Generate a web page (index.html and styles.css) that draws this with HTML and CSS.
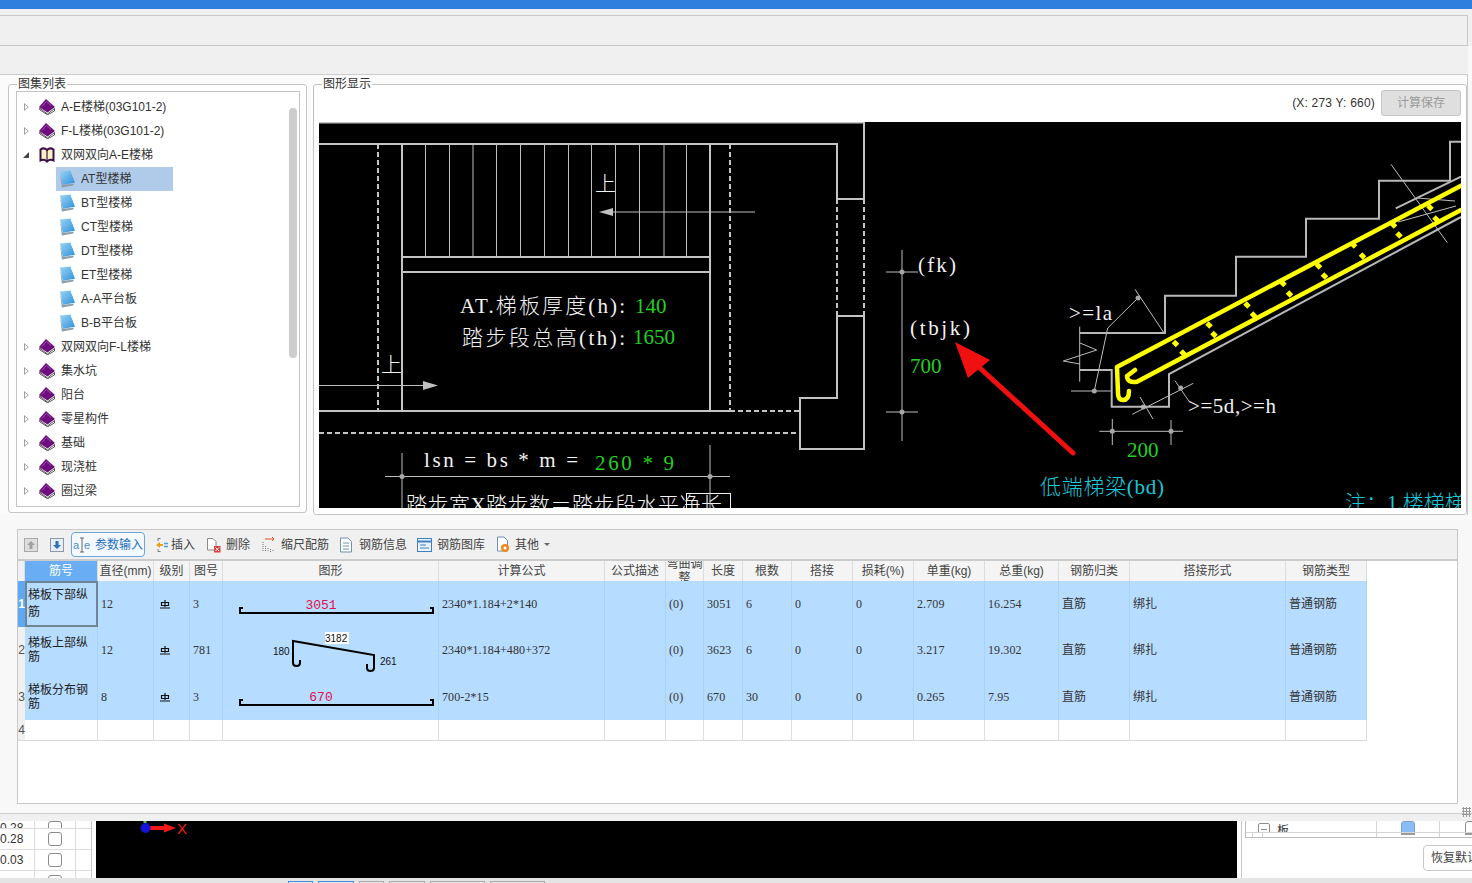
FILE: index.html
```html
<!DOCTYPE html>
<html lang="zh">
<head>
<meta charset="utf-8">
<title>钢筋编辑</title>
<link rel="stylesheet" href="styles.css">
</head>
<body>
<svg class="defs" aria-hidden="true">
  <defs>
    <linearGradient id="docBlue" x1="0" y1="0" x2="1" y2="1">
      <stop offset="0" stop-color="#9ad4f4"/><stop offset="1" stop-color="#2f90dc"/>
    </linearGradient>
    <symbol id="book" viewBox="0 0 16 16">
      <path d="M.5 9 8.500 15 15.500 9.500V12L8.500 15.800 1 11Z" fill="#fff" stroke="#333" stroke-width=".8"/>
      <path d="M0 8 7 0 16 8 8.500 13.500Z" fill="#6f0f7d"/>
      <path d="M3 7.500 7.500 2.500 12 6.500" stroke="#9c46ac" stroke-width="1" fill="none"/>
    </symbol>
    <symbol id="bookOpen" viewBox="0 0 16 16">
      <path d="M1.500 2.500 Q5 0 8 3 Q11 0 14.500 2.500V13.500Q11 11.500 8 14.500 Q5 11.500 1.500 13.500Z" fill="#fbf3c4" stroke="#3e1046" stroke-width="2"/>
      <path d="M8 3V14" stroke="#3e1046" stroke-width="1.200"/>
    </symbol>
    <symbol id="doc" viewBox="0 0 16 18">
      <path d="M0 2 2 18 14 16 15 14 3 15Z" fill="#8f9ca6"/>
      <path d="M0 1 11 0 16 13 3 15Z" fill="url(#docBlue)"/>
    </symbol>
    <symbol id="grade" viewBox="0 0 10 10">
      <path d="M1.500 3.500H8.500V6.500H1.500ZM5 1V8M0 9H10" fill="none" stroke="#111" stroke-width="1.200"/>
    </symbol>
  </defs>
</svg>

<div class="dialog">
  <div class="titlebar"></div>
  <div class="band band-first"><div class="band-box"></div></div>
  <div class="band band-second"></div>

  <div class="workspace">
    <fieldset class="group group-list">
      <legend>图集列表</legend>
      <div class="listbox">
        <ul class="tree">
          <li class="node"><span class="tw"></span><svg class="ico"><use href="#book"/></svg><span>A-E楼梯(03G101-2)</span></li>
          <li class="node"><span class="tw"></span><svg class="ico"><use href="#book"/></svg><span>F-L楼梯(03G101-2)</span></li>
          <li class="node"><span class="tw open"></span><svg class="ico"><use href="#bookOpen"/></svg><span>双网双向A-E楼梯</span></li>
          <li class="leaf selected"><svg class="ico-doc"><use href="#doc"/></svg><span>AT型楼梯</span></li>
          <li class="leaf"><svg class="ico-doc"><use href="#doc"/></svg><span>BT型楼梯</span></li>
          <li class="leaf"><svg class="ico-doc"><use href="#doc"/></svg><span>CT型楼梯</span></li>
          <li class="leaf"><svg class="ico-doc"><use href="#doc"/></svg><span>DT型楼梯</span></li>
          <li class="leaf"><svg class="ico-doc"><use href="#doc"/></svg><span>ET型楼梯</span></li>
          <li class="leaf"><svg class="ico-doc"><use href="#doc"/></svg><span>A-A平台板</span></li>
          <li class="leaf"><svg class="ico-doc"><use href="#doc"/></svg><span>B-B平台板</span></li>
          <li class="node"><span class="tw"></span><svg class="ico"><use href="#book"/></svg><span>双网双向F-L楼梯</span></li>
          <li class="node"><span class="tw"></span><svg class="ico"><use href="#book"/></svg><span>集水坑</span></li>
          <li class="node"><span class="tw"></span><svg class="ico"><use href="#book"/></svg><span>阳台</span></li>
          <li class="node"><span class="tw"></span><svg class="ico"><use href="#book"/></svg><span>零星构件</span></li>
          <li class="node"><span class="tw"></span><svg class="ico"><use href="#book"/></svg><span>基础</span></li>
          <li class="node"><span class="tw"></span><svg class="ico"><use href="#book"/></svg><span>现浇桩</span></li>
          <li class="node"><span class="tw"></span><svg class="ico"><use href="#book"/></svg><span>圈过梁</span></li>
        </ul>
        <div class="scroll-thumb"></div>
      </div>
    </fieldset>

    <fieldset class="group group-view">
      <legend>图形显示</legend>
      <div class="view-head">
        <span class="coords">(X: 273 Y: 660)</span>
        <button class="save-btn" disabled>计算保存</button>
      </div>
      <svg class="cad" viewBox="319 122 1142 386" width="1142" height="386">
        <g class="wall">
          <path d="M319 122.500H864M319 144H837V199H864M864 122V199M837 316H864V449H800V398H837V316"/>
          <path d="M319 411H730M402 144V411M710 144V411M402 257H710M402 272H710"/>
        </g>
        <g class="wall-dash">
          <path d="M378 144V411M730 144V411M730 411H800M319 433H800M837 199V316M864 199V316"/>
        </g>
        <g class="thin">
          <path d="M425.500 144V257M449.500 144V257M473 144V257M496.500 144V257M520.500 144V257M544.500 144V257M568.500 144V257M591.500 144V257M615.500 144V257M639.500 144V257M664 144V257M686.500 144V257"/>
          <path d="M613 212H755M319 385.500H423"/>
          <path d="M402 453V508M710 445V508M385 476.500H730"/>
          <path d="M902 250V441M886 272H918M886 412H918"/>
          <path d="M1135 289.300 1164 333M1138 298 1107.700 328 1094.300 391H1071M1094.300 391H1112M1079.700 326.700V381.700M1080 343 1096.700 350 1063.300 361 1080 364"/>
          <path d="M1175 380.700 1189.300 401.700M1140 397 1153 419M1132.300 414.300 1193.300 383.300"/>
          <path d="M1099.300 431.300H1183M1112.300 419V445M1171 420V445"/>
          <path d="M1391 164.300 1447.300 242.700M1455 201 1417 198M1398 222 1456 206"/>
        </g>
        <path class="arrowhead" d="M599 212 613 208V216ZM438 385.500 423 381V390Z"/>
        <g class="dots">
          <circle cx="402" cy="476.500" r="2.500"/><circle cx="710" cy="476.500" r="2.500"/>
          <circle cx="902" cy="272" r="2.500"/><circle cx="902" cy="412" r="2.500"/>
          <circle cx="1138" cy="298" r="2.500"/><circle cx="1094.300" cy="391" r="2.500"/>
          <circle cx="1143.300" cy="407" r="2.500"/><circle cx="1180.700" cy="388" r="2.500"/>
          <circle cx="1112.300" cy="431.300" r="2.500"/><circle cx="1171" cy="431.300" r="2.500"/>
        </g>
        <rect class="note-box" x="686.500" y="493.500" width="44" height="20"/>
        <g class="wall-gray">
          <path d="M1079.700 333H1165V295.700H1236V256.700H1306V218.700H1379V180.700H1450V141.700H1462"/>
          <path d="M1079.700 370H1111.700V406.700H1169V374L1461 217M1395.700 208.300 1461 176.700"/>
        </g>
        <g class="rebar">
          <path d="M1461 185.700 1117 367 1118 393Q1118 400 1123 400 1129 400 1129 391"/>
          <path d="M1461 210 1137 381.700Q1127 383 1127 376L1135 370"/>
        </g>
        <path class="rebar-dots" d="M1173.500 341.500l4 4M1207 323l4 4M1245 303l4 4M1281 281.500l4 4M1316.500 264l4 4M1351.500 243l4 4M1391.500 223l4 4M1428 205.500l4 4M1181 351l4 4M1212 332.500l4 4M1251.500 313l4 4M1287.500 292l4 4M1322.500 274l4 4M1360.500 254l4 4M1397 233l4 4M1434 217l4 4"/>
        <path class="red-shaft" d="M1073 453 970 359"/>
        <path class="red-head" d="M955 342 990 360 968 378Z"/>

        <text class="t-white" x="595" y="191"><tspan class="cjk">上</tspan></text>
        <text class="t-white" x="381" y="372"><tspan class="cjk">上</tspan></text>
        <text class="t-white" x="460" y="313" textLength="165">AT.<tspan class="cjk">梯板厚度</tspan>(h):</text>
        <text class="t-green" x="635" y="313">140</text>
        <text class="t-white" x="462" y="345" textLength="163"><tspan class="cjk">踏步段总高</tspan>(th):</text>
        <text class="t-green" x="633" y="344">1650</text>
        <text class="t-white" x="424" y="467" textLength="154">lsn = bs * m =</text>
        <text class="t-green" x="595" y="470" textLength="79">260 * 9</text>
        <text class="t-white" x="406" y="512" textLength="316"><tspan class="cjk">踏步宽</tspan>X<tspan class="cjk">踏步数＝踏步段水平净长</tspan></text>
        <text class="t-white" x="918" y="272" textLength="38">(fk)</text>
        <text class="t-white" x="910" y="335" textLength="60">(tbjk)</text>
        <text class="t-green" x="910" y="373">700</text>
        <text class="t-white" x="1069" y="320" textLength="43">&gt;=la</text>
        <text class="t-white" x="1188" y="413" textLength="88">&gt;=5d,&gt;=h</text>
        <text class="t-green" x="1127" y="457">200</text>
        <text class="t-cyan" x="1040" y="494" textLength="124"><tspan class="cjk">低端梯梁</tspan>(bd)</text>
        <text class="t-cyan" x="1345" y="510"><tspan class="cjk">注：</tspan>1.<tspan class="cjk">楼梯梯板</tspan></text>
      </svg>
    </fieldset>
  </div>

  <section class="editor">
    <div class="toolbar">
      <span class="tool-square"><svg width="14" height="14" viewBox="0 0 14 14"><rect x=".5" y=".5" width="13" height="13" fill="#dedede" stroke="#a8a8a8"/><path d="M7 3 11 7H8.500V11H5.500V7H3Z" fill="#a0a0a0"/></svg></span>
      <span class="tool-square"><svg width="14" height="14" viewBox="0 0 14 14"><rect x=".5" y=".5" width="13" height="13" fill="#e8eef5" stroke="#8a98a8"/><path d="M7 11 3 7H5.500V3H8.500V7H11Z" fill="#2f6fb8"/></svg></span>
      <button class="tool tool-active"><svg width="18" height="16" viewBox="0 0 18 16"><text class="tool-glyph" x="0" y="12">a</text><path d="M9 1V15M7 1H11M7 15H11" stroke="#666" fill="none"/><text class="tool-glyph" x="11" y="12">e</text></svg><span>参数输入</span></button>
      <span class="tool tool-ins"><svg width="14" height="16" viewBox="0 0 14 16"><path d="M3 1.500H5.500M3 14.500H5.500M3 1.500V4M3 12V14.500" stroke="#777" fill="none"/><path d="M9 6.500H13M9 9.500H13" stroke="#4aa0d8" stroke-width="1.500"/><path d="M1 8 5 5V7H8V9H5V11Z" fill="#e8a020"/></svg><span>插入</span></span>
      <span class="tool tool-del"><svg width="15" height="16" viewBox="0 0 15 16"><path d="M1.500 1.500H7L10 4.500V13H1.500Z" fill="#fff" stroke="#8a8a8a"/><rect x="8" y="9" width="6.500" height="6.500" fill="#d8423c"/><path d="M9.500 10.500 13 14M13 10.500 9.500 14" stroke="#fff"/></svg><span>删除</span></span>
      <span class="tool"><svg width="14" height="16" viewBox="0 0 14 16"><path d="M1 5V15M3.500 9V15M6 11V15M8.500 12V15M11 13V15" stroke="#777" stroke-dasharray="1 1"/><path d="M3 2H12M10 0 12 2 10 4" stroke="#e0562c" fill="none"/></svg><span>缩尺配筋</span></span>
      <span class="tool tool-info"><svg width="14" height="16" viewBox="0 0 14 16"><path d="M1.500 1H9L12.500 4.500V15H1.500Z" fill="#fff" stroke="#6d90b4"/><path d="M4 6H10M4 9H10M4 12H10" stroke="#6d90b4"/></svg><span>钢筋信息</span></span>
      <span class="tool"><svg width="15" height="14" viewBox="0 0 15 14"><rect x=".5" y=".5" width="14" height="13" fill="#eaf3fb" stroke="#3f80c0"/><path d="M1 3.500H14" stroke="#3f80c0" stroke-width="2"/><path d="M3 7H9M3 10H12" stroke="#3f80c0"/></svg><span>钢筋图库</span></span>
      <span class="tool tool-other"><svg width="16" height="17" viewBox="0 0 16 17"><path d="M2.500 1H9L12.500 4.500V15H2.500Z" fill="#fff" stroke="#6d90b4"/><circle cx="10" cy="12" r="4" fill="#ef8a18"/><circle cx="10" cy="12" r="1.500" fill="#fff"/></svg><span>其他</span><span class="caret"></span></span>
    </div>

    <table class="grid">
      <colgroup>
        <col class="c-rh"><col class="c-no"><col class="c-dia"><col class="c-lv"><col class="c-fig"><col class="c-shape"><col class="c-formula"><col class="c-desc"><col class="c-bend"><col class="c-len"><col class="c-cnt"><col class="c-lap"><col class="c-loss"><col class="c-uw"><col class="c-tw"><col class="c-cat"><col class="c-form"><col class="c-type">
      </colgroup>
      <thead>
        <tr>
          <th class="corner"></th><th class="hl">筋号</th><th>直径(mm)</th><th>级别</th><th>图号</th><th>图形</th><th>计算公式</th><th>公式描述</th><th><div class="clip"><span>弯曲调整</span></div></th><th>长度</th><th>根数</th><th>搭接</th><th>损耗(%)</th><th>单重(kg)</th><th>总重(kg)</th><th>钢筋归类</th><th>搭接形式</th><th>钢筋类型</th>
        </tr>
      </thead>
      <tbody>
        <tr class="row-a">
          <td class="rh rh-on">1</td><td class="name cur">梯板下部纵筋</td><td class="num">12</td><td class="sym"><svg width="10" height="10"><use href="#grade"/></svg></td><td class="num">3</td>
          <td class="shape"><svg viewBox="223 581 216 46" width="216" height="46"><path class="bar" d="M243 608H240V613H433V608H430"/><text class="len" x="321" y="609">3051</text></svg></td>
          <td class="num">2340*1.184+2*140</td><td></td><td class="num">(0)</td><td class="num">3051</td><td class="num">6</td><td class="num">0</td><td class="num">0</td><td class="num">2.709</td><td class="num">16.254</td><td class="cn">直筋</td><td class="cn">绑扎</td><td class="cn">普通钢筋</td>
        </tr>
        <tr class="row-b">
          <td class="rh">2</td><td class="name">梯板上部纵筋</td><td class="num">12</td><td class="sym"><svg width="10" height="10"><use href="#grade"/></svg></td><td class="num">781</td>
          <td class="shape"><svg viewBox="223 627 216 46" width="216" height="46"><path class="bar" d="M300 660V663Q300 666 296.500 666 293 666 293 663V641L374 655V668Q374 671 370.500 671 367 671 367 668V664"/><rect class="dim-bg" x="325" y="632" width="24" height="12"/><text class="dim" x="325" y="642">3182</text><text class="dim" x="273" y="655">180</text><text class="dim" x="380" y="665">261</text></svg></td>
          <td class="num">2340*1.184+480+372</td><td></td><td class="num">(0)</td><td class="num">3623</td><td class="num">6</td><td class="num">0</td><td class="num">0</td><td class="num">3.217</td><td class="num">19.302</td><td class="cn">直筋</td><td class="cn">绑扎</td><td class="cn">普通钢筋</td>
        </tr>
        <tr class="row-c">
          <td class="rh">3</td><td class="name">梯板分布钢筋</td><td class="num">8</td><td class="sym"><svg width="10" height="10"><use href="#grade"/></svg></td><td class="num">3</td>
          <td class="shape"><svg viewBox="223 673 216 47" width="216" height="47"><path class="bar" d="M243 700H240V705H433V700H430"/><text class="len" x="321" y="701">670</text></svg></td>
          <td class="num">700-2*15</td><td></td><td class="num">(0)</td><td class="num">670</td><td class="num">30</td><td class="num">0</td><td class="num">0</td><td class="num">0.265</td><td class="num">7.95</td><td class="cn">直筋</td><td class="cn">绑扎</td><td class="cn">普通钢筋</td>
        </tr>
        <tr class="row-d">
          <td class="rh">4</td><td></td><td></td><td></td><td></td><td></td><td></td><td></td><td></td><td></td><td></td><td></td><td></td><td></td><td></td><td></td><td></td><td></td>
        </tr>
      </tbody>
    </table>
  </section>
  <span class="grip"></span>
</div>

<div class="under">
  <div class="under-left">
    <div class="ul-row ul-clip-top"><span class="ul-num">0.28</span><span class="ul-chk"><i class="box"></i></span><span></span></div>
    <div class="ul-row"><span class="ul-num">0.28</span><span class="ul-chk"><i class="box"></i></span><span></span></div>
    <div class="ul-row"><span class="ul-num">0.03</span><span class="ul-chk"><i class="box"></i></span><span></span></div>
    <div class="ul-row ul-clip-bottom"><span class="ul-num"></span><span class="ul-chk"><i class="box"></i></span><span></span></div>
  </div>
  <svg class="viewport" viewBox="96 821 1141 57" width="1141" height="57">
    <path d="M145 819V823" stroke="#4fc06a" stroke-width="3"/>
    <path d="M150 828H165" stroke="#f01818" stroke-width="4"/>
    <path d="M176 828 164 823.500V832.500Z" fill="#f01818"/>
    <circle cx="145.500" cy="828" r="5" fill="#1414d8"/>
    <text class="axis" x="177" y="834">X</text>
  </svg>
  <div class="under-right">
    <div class="ur-table">
      <div class="ur-row">
        <span class="ur-c1"><i class="minus"></i><span>板</span></span><span class="ur-c3"><i class="box box-on"></i></span><span class="ur-c4"><i class="box"></i></span>
      </div>
      <div class="ur-row ur-next"><span class="ur-t1"></span><span class="ur-t2"></span><span class="ur-t3"></span><span class="ur-c3"><i class="stub"></i></span><span class="ur-c4"><i class="stub"></i></span></div>
    </div>
    <div class="ur-actions"><button class="reset-btn">恢复默认</button></div>
  </div>
</div>

<div class="statusbar">
  <i class="tab tab-on tab-a"></i><i class="tab tab-on tab-b"></i><i class="tab tab-a"></i><i class="tab tab-b"></i><i class="tab tab-c"></i><i class="tab tab-c"></i>
</div>
</body>
</html>
```

FILE: styles.css
```css
* { box-sizing: border-box; }
html, body { margin: 0; padding: 0; }
body {
  width: 1472px;
  height: 883px;
  overflow: hidden;
  background: #f0f0f0;
  font: 12px/14px "Liberation Sans", "Noto Sans CJK SC", sans-serif;
  color: #333;
}
.defs { position: absolute; width: 0; height: 0; }

.dialog {
  position: relative;
  height: 814px;
  background: #f8f8f8;
  border-bottom: 1px solid #cfcfcf;
}
.titlebar { height: 9px; background: #2e7fde; }
.band { background: #f0f0f0; }
.band-first { height: 37px; padding-top: 6px; }
.band-box { width: 1468px; height: 31px; border: 1px solid #c9c9c9; border-left: 0; }
.band-second { width: 1468px; height: 29px; border-bottom: 1px solid #cdcdcd; }

.workspace {
  display: flex;
  align-items: flex-start;
  gap: 6px;
  width: 1468px;
  height: 440px;
  padding: 2px 0 0 8px;
  background: #fbfbfb;
  border-right: 1px solid #c9c9c9;
}
.group {
  margin: 0;
  min-width: 0;
  border: 1px solid #c4c4c4;
  border-radius: 3px;
  background: #fff;
}
.group legend { padding: 0 1px; line-height: 14px; color: #333; }
.group-list { width: 299px; height: 436px; padding: 0 6px 4px 7px; }
.group-list legend { margin-left: 1px; }
.group-view { width: 1154px; height: 438px; padding: 0 5px 6px 5px; }
.group-view legend { margin-left: 3px; }

.listbox {
  display: flex;
  height: 416px;
  background: #fff;
  border: 1px solid #c4c4c4;
}
.tree { flex: 1; margin: 0; padding: 3px 0 0; list-style: none; overflow: hidden; }
.node, .leaf { display: flex; align-items: center; height: 24px; }
.node { padding-left: 7px; }
.leaf { width: 117px; margin-left: 39px; padding-left: 4px; }
.leaf.selected { background: #b0caea; }
.tw {
  width: 0; height: 0;
  margin-right: 10px;
  border-left: 5px solid #a0a0a0;
  border-top: 4px solid transparent;
  border-bottom: 4px solid transparent;
  position: relative;
}
.tw::after {
  content: "";
  position: absolute;
  left: -4px; top: -2px;
  border-left: 3px solid #fff;
  border-top: 2px solid transparent;
  border-bottom: 2px solid transparent;
}
.tw.open { border-left: 0; border-right: 6px solid #444; border-top: 6px solid transparent; border-bottom: 0; margin-left: -1px; margin-right: 10px; }
.tw.open::after { display: none; }
.ico { width: 16px; height: 16px; margin-right: 6px; }
.ico-doc { width: 15px; height: 18px; margin-right: 6px; }
.scroll-thumb {
  width: 8px;
  height: 250px;
  margin: 16px 2px 0 0;
  background: #cdcdcd;
  border-radius: 4px;
}

.view-head { display: flex; justify-content: flex-end; align-items: flex-start; gap: 6px; height: 32px; margin-top: -1px; }
.coords { padding-top: 6px; font-size: 12px; letter-spacing: .2px; color: #333; }
.save-btn {
  width: 80px; height: 26px; padding: 0;
  border: 1px solid #c6c6c6;
  border-radius: 3px;
  background: #dfdfdf;
  color: #9a9a9a;
  font: inherit;
}

.cad { display: block; background: #000; overflow: hidden; }
.cad text { font-family: "Liberation Serif", "Noto Sans CJK SC", serif; font-size: 21px; }
.cad .cjk { font-family: "Noto Sans CJK SC", sans-serif; font-size: 21px; font-weight: 300; }
.wall path, .wall-gray path { fill: none; stroke: #c4c4c4; stroke-width: 2; }
.wall-gray path { stroke: #b8b8b8; }
.wall-dash path { fill: none; stroke: #c4c4c4; stroke-width: 2; stroke-dasharray: 5 3; }
.thin path { fill: none; stroke: #bdbdbd; stroke-width: 1; }
.arrowhead { fill: #c0c0c0; }
.dots circle { fill: #a8a8a8; }
.note-box { fill: none; stroke: #eee; }
.rebar path { fill: none; stroke: #ffff00; stroke-width: 4.500; stroke-linejoin: round; stroke-linecap: round; }
.rebar-dots { fill: none; stroke: #ffff00; stroke-width: 5; }
.red-shaft { fill: none; stroke: #f01010; stroke-width: 5; stroke-linecap: round; }
.red-head { fill: #f01010; }
.t-white { fill: #f2f2f2; }
.t-green { fill: #22d022; }
.t-cyan { fill: #19c8d8; }

.editor {
  display: flex;
  flex-direction: column;
  width: 1441px;
  height: 275px;
  margin: 14px 0 0 17px;
  background: #fff;
  border: 1px solid #c8c8c8;
}
.toolbar {
  display: flex;
  flex: none;
  align-items: center;
  height: 31px;
  padding: 0 0 0 6px;
  background: #f0f0f0;
  border-bottom: 2px solid #cbcbcb;
  color: #444;
}
.tool-square { display: flex; width: 26px; }
.tool {
  display: flex;
  align-items: center;
  gap: 5px;
  margin-right: 10px;
  background: none;
  border: 0;
  padding: 0;
  font: inherit;
  color: #444;
  white-space: nowrap;
}
.tool-ins { gap: 2px; margin-right: 11px; }
.tool-del { margin-right: 12px; }
.tool-info { gap: 6px; }
.tool-other { gap: 4px; }
.tool-active {
  flex: none;
  height: 25px;
  width: 74px;
  margin: 0 10px 0 -5px;
  padding: 0 0 0 1px;
  gap: 4px;
  border: 1px solid #6aa5dc;
  border-radius: 4px;
  background: #f4f9ff;
  color: #1f6fc0;
}
.tool-glyph { font: 11px "Liberation Sans", sans-serif; fill: #4a8ccc; }
.caret { width: 0; height: 0; margin-left: 1px; border: 3px solid transparent; border-top: 3px solid #666; border-bottom: 0; }

.grid { table-layout: fixed; width: 1349px; border-collapse: separate; border-spacing: 0; }
.c-rh { width: 7px; } .c-no { width: 73px; } .c-dia { width: 56px; } .c-lv { width: 36px; }
.c-fig { width: 33px; } .c-shape { width: 216px; } .c-formula { width: 166px; } .c-desc { width: 61px; }
.c-bend { width: 38px; } .c-len { width: 39px; } .c-cnt { width: 49px; } .c-lap { width: 61px; }
.c-loss { width: 61px; } .c-uw { width: 71px; } .c-tw { width: 74px; } .c-cat { width: 71px; }
.c-form { width: 156px; } .c-type { width: 81px; }
.grid th {
  height: 20px;
  padding: 0;
  font-weight: 400;
  color: #444;
  background: #f4f4f4;
  border-right: 1px solid #dcdcdc;
  white-space: nowrap;
}
.grid th.hl { background: #69aef4; color: #fff; }
.clip { display: flex; align-items: center; justify-content: center; height: 20px; overflow: hidden; white-space: normal; }
.clip span { display: block; flex: none; width: 36px; }
.grid td {
  padding: 0 0 0 3px;
  vertical-align: middle;
  border-right: 1px solid #a8d2f8;
  overflow: hidden;
}
.row-a td, .row-b td, .row-c td { background: #b6dcff; color: #333; }
.row-a td { height: 46px; }
.row-b td { height: 46px; }
.row-c td { height: 47px; }
.row-d td { height: 21px; background: #fff; border-right-color: #dedede; border-bottom: 1px solid #d8d8d8; }
.grid .corner { background: #f0f0f0; }
.grid td.rh { padding: 0; text-align: center; color: #555; font-size: 12px; background: #f0f0f0; border-right: 0; }
.row-a td.rh-on { background: #5fa8f2; color: #fff; font-weight: 700; }
.grid td.name { line-height: 14px; color: #222; }
.grid td.cur { outline: 2px solid #6f8494; outline-offset: -2px; line-height: 17px; }
.grid td.num { font: 12px/14px "Liberation Serif", serif; letter-spacing: .1px; white-space: nowrap; }
.grid td.sym { padding-left: 6px; }
.grid td.sym svg { display: block; }
.grid td.shape { padding: 0; }
.grid td.shape svg { display: block; }
.grid td.cn { white-space: nowrap; }
.bar { fill: none; stroke: #000; stroke-width: 2; }
.len { font: 13px "Liberation Mono", monospace; fill: #e01048; text-anchor: middle; }
.dim { font: 10px "Liberation Sans", sans-serif; fill: #111; }
.dim-bg { fill: #fff; }

.grip {
  position: absolute;
  right: 1px; bottom: -4px;
  width: 9px; height: 10px;
  background: radial-gradient(circle, #9a9a9a 1px, transparent 1.200px) 0 0 / 3px 3px;
}

.under { display: flex; height: 57px; margin-top: 7px; background: #fff; }
.under-left { width: 92px; display: grid; grid-template-rows: 8px 21px 21px 7px; border-right: 1px solid #c8c8c8; flex: none; }
.ul-row {
  display: grid;
  grid-template-columns: 34px 42px 1fr;
  overflow: hidden;
  border-bottom: 1px solid #dcdcdc;
}
.ul-row:last-child { border-bottom: 0; }
.ul-num { display: flex; align-items: center; justify-content: flex-end; padding-right: 10px; font-size: 12px; color: #333; overflow: hidden; white-space: nowrap; direction: rtl; }
.ul-chk { display: flex; align-items: center; justify-content: center; border-left: 1px solid #dcdcdc; border-right: 1px solid #dcdcdc; }
.ul-clip-top .ul-num, .ul-clip-top .ul-chk { align-items: flex-end; }
.ul-clip-bottom .ul-chk { align-items: flex-start; padding-top: 4px; }
.box { display: block; flex: none; width: 14px; height: 14px; border: 1px solid #8c8c8c; border-radius: 3px; background: #fff; }
.box-on { background: #88bdf8; border-color: #7aa0cc; }
.viewport { flex: none; margin-left: 4px; background: #000; }
.under-right { flex: 1; margin-left: 4px; border-left: 1px solid #c8c8c8; padding-left: 3px; }
.ur-table { height: 17px; border-left: 1px solid #bdbdbd; border-bottom: 1px solid #bdbdbd; overflow: hidden; }
.ur-row {
  display: grid;
  grid-template-columns: 130px 63px 1fr;
  height: 12px;
  border-bottom: 1px solid #d4d4d4;
  overflow: hidden;
}
.ur-next { grid-template-columns: 7px 10px 113px 63px 1fr; height: 4px; border-bottom: 0; }
.ur-t1, .ur-t2 { border-right: 1px solid #d4d4d4; }
.ur-c1 { display: flex; align-items: flex-end; gap: 7px; padding-left: 12px; color: #333; }
.minus { display: block; flex: none; width: 12px; height: 12px; margin-bottom: 3px; border: 1px solid #8c8c8c; border-radius: 2px; background: linear-gradient(#8c8c8c, #8c8c8c) center / 6px 1px no-repeat #fff; }
.ur-c3, .ur-c4 { display: flex; align-items: flex-end; justify-content: center; border-left: 1px solid #d4d4d4; padding-bottom: 3px; }
.ur-next .ur-c3, .ur-next .ur-c4 { padding-bottom: 0; align-items: flex-start; }
.ur-c4 { justify-content: flex-start; padding-left: 25px; }
.stub { display: block; width: 14px; height: 2px; background: #9a9a9a; }
.ur-actions { display: flex; padding: 7px 0 0 178px; }
.reset-btn {
  flex: none;
  width: 70px; height: 26px; padding: 0 0 0 7px;
  text-align: left;
  white-space: nowrap;
  background: #fff;
  border: 1px solid #c8c8c8;
  border-radius: 4px;
  font: inherit;
  color: #444;
}
.axis { font: 15px "Liberation Sans", sans-serif; fill: #f01818; }

.statusbar { display: flex; gap: 5px; height: 5px; padding: 3px 0 0 288px; background: #e4e4e4; }
.tab { display: block; height: 2px; border: 1px solid #aaa; border-bottom: 0; background: #e8e8e8; }
.tab-a { width: 25px; }
.tab-b { width: 36px; }
.tab-c { width: 55px; }
.tab-on { border-color: #3f8ee0; }
```
